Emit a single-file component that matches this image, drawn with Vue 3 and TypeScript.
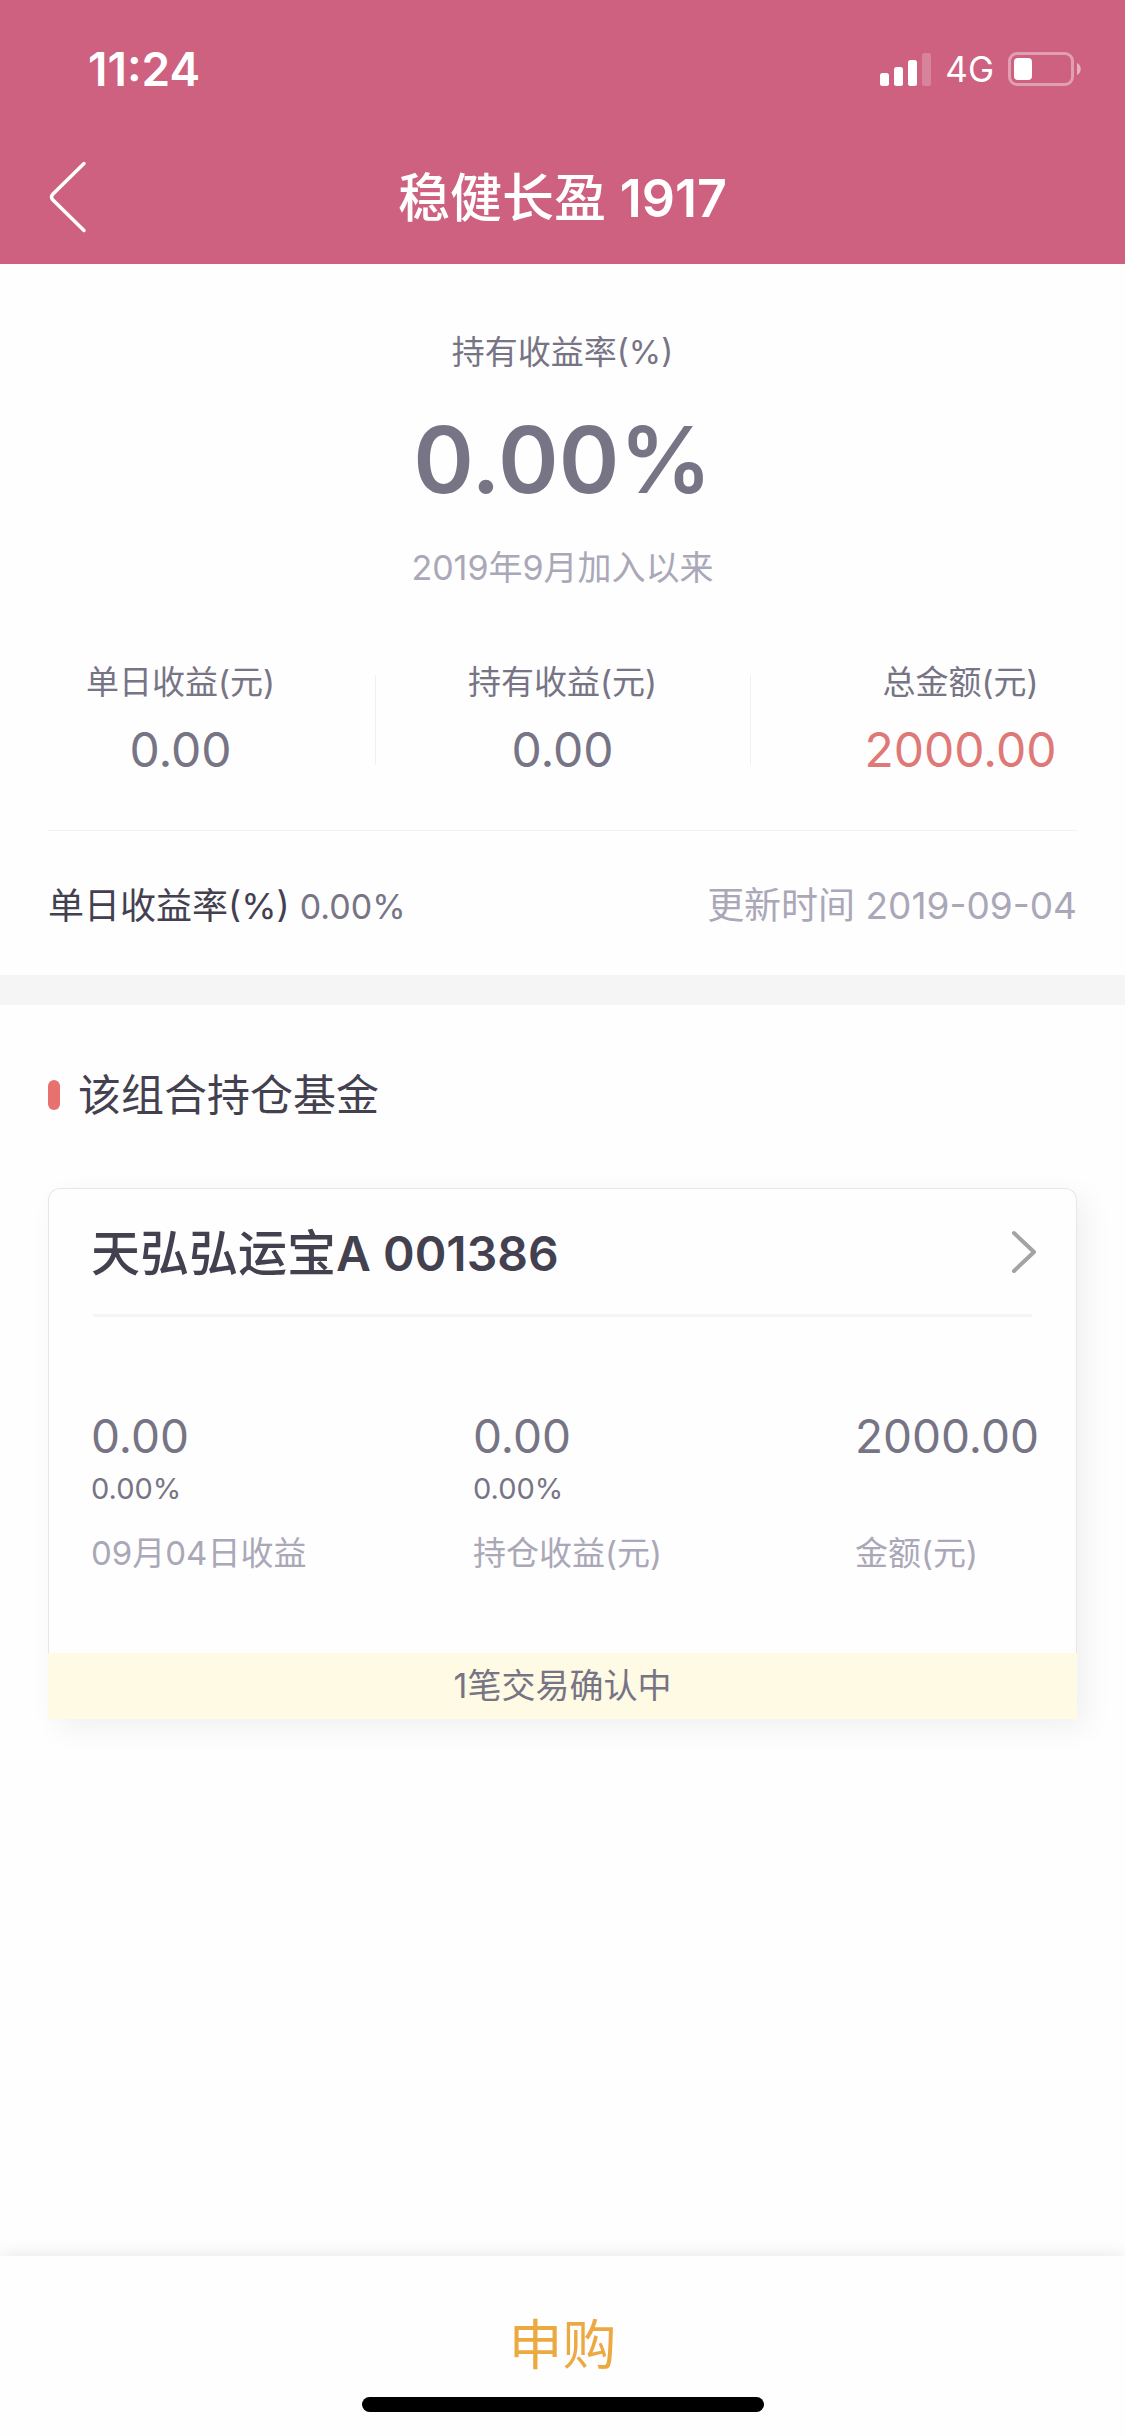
<script setup lang="ts">
interface Stat {
  label: string
  value: string
  accent?: boolean
}

interface Holding {
  label: string
  value: string
  rate?: string
}

const stats: Stat[] = [
  { label: '单日收益(元)', value: '0.00' },
  { label: '持有收益(元)', value: '0.00' },
  { label: '总金额(元)', value: '2000.00', accent: true },
]

const holdings: Holding[] = [
  { label: '09月04日收益', value: '0.00', rate: '0.00%' },
  { label: '持仓收益(元)', value: '0.00', rate: '0.00%' },
  { label: '金额(元)', value: '2000.00' },
]
</script>

<template>
  <div class="page">
    <header class="header">
      <div class="status">
        <span class="clock">11:24</span>
        <div class="indicators">
          <svg width="52" height="34" viewBox="0 0 52 34" aria-hidden="true">
            <rect x="0" y="21" width="9" height="13" rx="2.5" fill="#fff" />
            <rect x="14" y="15" width="9" height="19" rx="2.5" fill="#fff" />
            <rect x="28" y="8" width="9" height="26" rx="2.5" fill="#fff" />
            <rect x="42" y="1" width="9" height="33" rx="2.5" fill="#fff" fill-opacity=".22" />
          </svg>
          <span class="network">4G</span>
          <svg width="74" height="34" viewBox="0 0 74 34" aria-hidden="true">
            <rect x="1.5" y="1.5" width="63" height="31" rx="7.5" fill="none" stroke="#fff" stroke-opacity=".4" stroke-width="3" />
            <rect x="6" y="6" width="18" height="22" rx="4" fill="#fff" />
            <path d="M69 11c5 2 5 10 0 12z" fill="#fff" fill-opacity=".5" />
          </svg>
        </div>
      </div>
      <nav class="nav">
        <button class="back" type="button" aria-label="返回">
          <svg width="40" height="74" viewBox="0 0 40 74" aria-hidden="true">
            <path d="M36 3.5L4.5 34.5Q2.5 37 4.5 39.5L36 70.5" fill="none" stroke="#fff" stroke-width="3.5" stroke-linecap="round" />
          </svg>
        </button>
        <h1 class="title">稳健长盈 <b>1917</b></h1>
      </nav>
    </header>

    <section class="summary">
      <p class="caption">持有收益率(%)</p>
      <p class="rate">0.00%</p>
      <p class="since">2019年9月加入以来</p>
      <div class="stats">
        <div v-for="stat in stats" :key="stat.label" class="stat">
          <span class="stat-label">{{ stat.label }}</span>
          <span class="stat-value" :class="{ accent: stat.accent }">{{ stat.value }}</span>
        </div>
      </div>
      <div class="daily">
        <p class="daily-rate">单日收益率(%) <span>0.00%</span></p>
        <p class="updated">更新时间 2019-09-04</p>
      </div>
    </section>

    <main class="funds">
      <h2 class="heading">该组合持仓基金</h2>
      <article class="card">
        <a class="card-head" href="#">
          <span class="fund-name">天弘弘运宝<b>A 001386</b></span>
          <svg width="26" height="44" viewBox="0 0 26 44" aria-hidden="true">
            <path d="M3 3L23 22L3 41" fill="none" stroke="#a3a3a3" stroke-width="4" stroke-linecap="round" stroke-linejoin="round" />
          </svg>
        </a>
        <div class="holdings">
          <div v-for="item in holdings" :key="item.label" class="holding">
            <span class="holding-value">{{ item.value }}</span>
            <span class="holding-rate">{{ item.rate }}</span>
            <span class="holding-label">{{ item.label }}</span>
          </div>
        </div>
        <p class="pending">1笔交易确认中</p>
      </article>
    </main>

    <footer class="footer">
      <button class="buy" type="button">申购</button>
      <div class="home-bar"></div>
    </footer>
  </div>
</template>

<style>
body {
  margin: 0;
  background: #fefefe;
}
</style>

<style scoped>
.page {
  display: flex;
  flex-direction: column;
  min-height: 100vh;
  font-family: Inter, "Noto Sans CJK SC", sans-serif;
  color: #777485;
}

p,
h1,
h2 {
  margin: 0;
  font-weight: 400;
}

b {
  font-weight: 600;
}

button {
  padding: 0;
  border: 0;
  background: none;
  font-family: inherit;
}

svg {
  display: block;
}

.header {
  background: #ce6080;
  color: #fff;
}

.status {
  display: flex;
  align-items: center;
  justify-content: space-between;
  height: 138px;
  padding: 0 43px 0 88px;
}

.clock {
  font-size: 46px;
  font-weight: 600;
}

.indicators {
  display: flex;
  align-items: center;
}

.network {
  margin: 0 14px 0 13px;
  font-size: 35px;
}

.nav {
  position: relative;
  display: flex;
  align-items: center;
  justify-content: center;
  height: 122px;
  padding-bottom: 4px;
}

.back {
  position: absolute;
  left: 48px;
  top: 22px;
}

.title {
  font-size: 52px;
  font-weight: 500;
  line-height: 72px;
}

.summary {
  padding: 64px 48px 45px;
  border-bottom: 30px solid #f5f5f5;
}

.caption,
.since {
  line-height: 48px;
  text-align: center;
}

.caption {
  font-size: 33px;
}

.since {
  font-size: 34px;
}

.rate {
  margin: 24px 0;
  font-size: 92px;
  font-weight: 600;
  line-height: 120px;
  text-align: center;
}

.since,
.updated {
  color: #aaa8b8;
}

.stats {
  display: grid;
  grid-template-columns: 1fr 1fr 1fr;
  margin: 66px -48px 0;
}

.stat {
  position: relative;
  display: flex;
  flex-direction: column;
  align-items: center;
  gap: 14px;
}

.stat:first-child {
  padding-right: 14px;
}

.stat:last-child {
  padding-left: 46px;
}

.stat:not(:last-child)::after {
  content: "";
  position: absolute;
  right: -1px;
  top: 17px;
  width: 1px;
  height: 90px;
  background: #f0f0f2;
}

.stat-label {
  font-size: 33px;
  line-height: 48px;
}

.stat-value {
  font-size: 48px;
  line-height: 60px;
}

.accent {
  color: #de7977;
}

.daily {
  display: flex;
  justify-content: space-between;
  height: 48px;
  margin-top: 50px;
  padding-top: 51px;
  border-top: 1px solid #f2f2f4;
  font-size: 36px;
  line-height: 48px;
}

.daily-rate {
  color: #43404f;
}

.daily-rate span {
  font-size: 34px;
  color: #777485;
}

.updated {
  font-size: 37px;
}

.funds {
  padding: 60px 48px;
}

.heading {
  display: flex;
  align-items: center;
  gap: 18px;
  font-size: 43px;
  line-height: 60px;
  color: #43404f;
}

.heading::before {
  content: "";
  width: 12px;
  height: 30px;
  border-radius: 6px;
  background: #e8716f;
}

.card {
  margin-top: 63px;
  border-radius: 12px 12px 0 0;
  box-shadow: 9px 9px 30px rgba(0, 0, 0, 0.06);
  background: #fefefe;
}

.card-head {
  display: flex;
  align-items: center;
  justify-content: space-between;
  height: 125px;
  padding: 0 39px 0 42px;
  border: 1px solid #e6e6e8;
  border-bottom: 0;
  border-radius: 12px 12px 0 0;
  color: #43404f;
  text-decoration: none;
}

.fund-name {
  padding-bottom: 4px;
  font-size: 49px;
  font-weight: 500;
}

.fund-name b {
  font-size: 48px;
}

.holdings {
  display: grid;
  grid-template-columns: 1fr 1fr auto;
  padding: 0 37px 76px 42px;
  border: solid #e6e6e8;
  border-width: 0 1px;
}

.holdings::before {
  content: "";
  grid-column: 1 / -1;
  height: 3px;
  margin: 0 7px 89px 2px;
  background: #f5f5f6;
}

.holding {
  display: flex;
  flex-direction: column;
}

.holding-value {
  font-size: 46px;
  line-height: 60px;
}

.holding-rate {
  height: 36px;
  margin: 5px 0 22px;
  font-size: 29px;
  line-height: 36px;
}

.holding-label {
  font-size: 33px;
  line-height: 48px;
  color: #aaa8b8;
}

.pending {
  background: #fffae3;
  font-size: 34px;
  line-height: 66px;
  text-align: center;
}

.footer {
  display: flex;
  flex-direction: column;
  align-items: center;
  margin-top: auto;
  padding-bottom: 24px;
  background: #fefefe;
  box-shadow: 0 0 18px rgba(0, 0, 0, 0.1);
}

.buy {
  width: 100%;
  padding-top: 39px;
  font-size: 54px;
  line-height: 102px;
  color: #eda941;
}

.home-bar {
  width: 402px;
  height: 15px;
  border-radius: 8px;
  background: #000;
}
</style>
